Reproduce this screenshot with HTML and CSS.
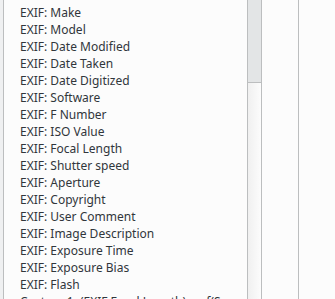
FILE: index.html
```html
<!DOCTYPE html>
<html lang="en">

<head>
    <meta charset="UTF-8">
    <meta name="viewport" content="width=device-width, initial-scale=1.0">
    <title>EXIF fields</title>
    <link rel="stylesheet" href="styles.css">
</head>

<body>
    <div class="frame">
        <div class="gutter"></div>

        <ul class="field-list">
            <li>EXIF: Make</li>
            <li>EXIF: Model</li>
            <li>EXIF: Date Modified</li>
            <li>EXIF: Date Taken</li>
            <li>EXIF: Date Digitized</li>
            <li>EXIF: Software</li>
            <li>EXIF: F Number</li>
            <li>EXIF: ISO Value</li>
            <li>EXIF: Focal Length</li>
            <li>EXIF: Shutter speed</li>
            <li>EXIF: Aperture</li>
            <li>EXIF: Copyright</li>
            <li>EXIF: User Comment</li>
            <li>EXIF: Image Description</li>
            <li>EXIF: Exposure Time</li>
            <li>EXIF: Exposure Bias</li>
            <li>EXIF: Flash</li>
            <li>Custom 1: (EXIF Focal Length) ~ of(S</li>
        </ul>

        <div class="scrollbar">
            <div class="thumb"></div>
        </div>

        <div class="side"></div>
        <div class="side-end"></div>
    </div>
</body>

</html>
```

FILE: styles.css
```css
body {
    font-family: 'Noto Sans', 'Open Sans', sans-serif;
    margin: 0;
    padding: 0;
    background-color: #fcfcfc;
    color: #31363b;
    overflow: hidden;
}

.frame {
    display: flex;
    height: 299px;
    overflow: hidden;
}

.gutter {
    width: 3px;
    background-color: #eff0f1;
    flex-shrink: 0;
}

.field-list {
    list-style: none;
    margin: 0;
    padding: 4px 0 0 16px;
    width: 227px;
    flex-shrink: 0;
    border-left: 1px solid #bcbebf;
    background-color: #fcfcfc;
    font-size: 12px;
    line-height: 17px;
    white-space: nowrap;
    overflow: hidden;
}

.scrollbar {
    width: 13px;
    flex-shrink: 0;
    border-left: 1px solid #bcbebf;
    border-right: 1px solid #bcbebf;
    background: linear-gradient(to right, #f0f0f0, #fcfcfc);
}

.thumb {
    height: 82px;
    background-color: #e3e5e6;
    border-bottom: 1px solid #bcbebf;
}

.side {
    width: 36px;
    flex-shrink: 0;
    border-right: 1px solid #bcbebf;
}

.side-end {
    flex-grow: 1;
}
```
